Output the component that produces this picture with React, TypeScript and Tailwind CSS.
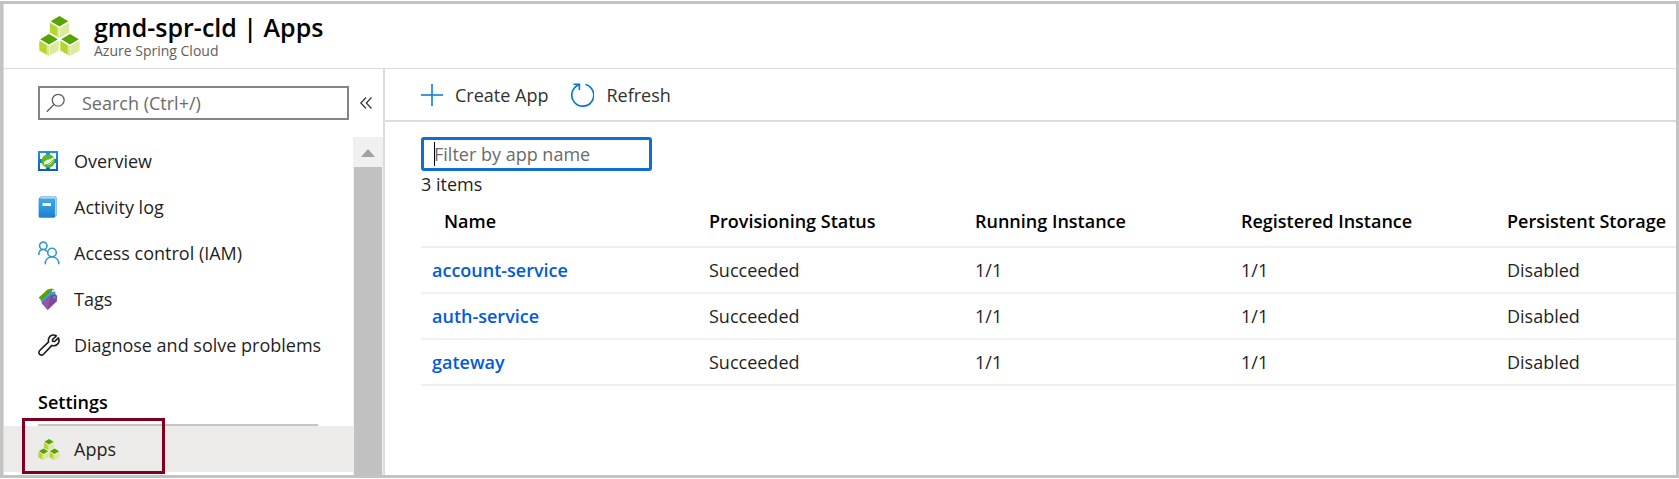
import type { ReactNode } from "react";

type App = {
  name: string;
  status: string;
  running: string;
  registered: string;
  storage: string;
};

const apps: App[] = [
  { name: "account-service", status: "Succeeded", running: "1/1", registered: "1/1", storage: "Disabled" },
  { name: "auth-service", status: "Succeeded", running: "1/1", registered: "1/1", storage: "Disabled" },
  { name: "gateway", status: "Succeeded", running: "1/1", registered: "1/1", storage: "Disabled" },
];

function Cube({ x, y }: { x: number; y: number }) {
  return (
    <g transform={`translate(${x} ${y})`}>
      <path d="M10 0 18.8 5.2 10 10.5 1.2 5.2Z" fill="#57a300" />
      <path d="M0.3 6.6 9.6 12.2V21.8L0.3 16.6Z" fill="#b4d62f" />
      <path d="M19.7 6.6 10.4 12.2V21.8L19.7 16.6Z" fill="#dcea9c" />
      <path d="M7.6 11 9.6 12.2V21.8L7.6 20.7Z" fill="#d9e98c" />
    </g>
  );
}

function CubesIcon({ className }: { className: string }) {
  return (
    <svg viewBox="0 0 41 40" className={className} aria-hidden="true">
      <Cube x={10.5} y={0} />
      <Cube x={0} y={18} />
      <Cube x={21} y={18} />
    </svg>
  );
}

function OverviewIcon() {
  return (
    <svg viewBox="0 0 20 20" className="size-5" aria-hidden="true">
      <defs>
        <linearGradient id="overview-frame" gradientUnits="userSpaceOnUse" x1="0" y1="0" x2="0" y2="20">
          <stop offset="0" stopColor="#1b93eb" />
          <stop offset="1" stopColor="#0f5cb5" />
        </linearGradient>
      </defs>
      <path
        d="M1 1H9V9H1ZM11 1H19V9H11ZM1 11H9V19H1ZM11 11H19V19H11Z"
        fill="#fff"
        stroke="url(#overview-frame)"
        strokeWidth="2"
      />
      <circle cx="10.2" cy="10" r="6.8" fill="#5db72e" />
      <path
        d="M15.600 5.500C14 8.200 11 8.200 8.800 9 6.200 10 5.400 12 6.200 13.800 9.500 14.800 13.200 13.200 14.800 10.400 15.700 8.800 15.900 7.200 15.600 5.500Z"
        fill="#eaf6e2"
      />
      <path d="M7 14C10.400 13.600 13.200 11.800 14.800 8.800" fill="none" stroke="#5db72e" strokeWidth="1" />
    </svg>
  );
}

function LogIcon() {
  return (
    <svg viewBox="0 0 20 22" className="h-[22px] w-5" aria-hidden="true">
      <defs>
        <linearGradient id="log-cover" x1="0" y1="0" x2="0" y2="1">
          <stop offset="0" stopColor="#3fa9ee" />
          <stop offset="1" stopColor="#1a80d2" />
        </linearGradient>
      </defs>
      <path d="M3 0.500H17.500A1 1 0 0 1 18.500 1.500V19.500L16.500 21.500H2A1.200 1.200 0 0 1 0.800 20.300V2.500Z" fill="#2a8cd8" />
      <path d="M3 1.300H17.700V19.300L16.900 20V2.400H1.800Z" fill="#e8f4fd" />
      <path d="M0.800 3H16.500V21.500H2A1.200 1.200 0 0 1 0.800 20.300Z" fill="url(#log-cover)" />
      <rect x="4.500" y="7" width="8.500" height="3" fill="#fff" />
    </svg>
  );
}

function PeopleIcon() {
  return (
    <svg
      viewBox="0 0 22 24"
      className="h-6 w-[22px]"
      fill="none"
      stroke="#3999c6"
      strokeWidth="1.600"
      strokeLinecap="round"
      aria-hidden="true"
    >
      <circle cx="5.300" cy="4.800" r="3.700" />
      <path d="M0.800 13.500C0.900 10.600 2.700 8.500 5.300 8.500 6.600 8.500 7.700 9 8.500 9.900" />
      <circle cx="14" cy="11.500" r="4.300" />
      <path d="M7.200 22.600C7.400 18.600 10.200 15.900 14 15.900S20.600 18.600 20.900 22.600" />
    </svg>
  );
}

function TagsIcon() {
  return (
    <svg viewBox="0 0 20 22" className="h-[22px] w-5" aria-hidden="true">
      <path d="M0.800 9.500 9.500 1.500 14 0.400 15.800 1.500V6L4 13.500Z" fill="#57a300" />
      <path d="M2.600 12.500 12.500 4 16.200 3.200 17.400 4.500V9L5 16.500Z" fill="#3c9fd4" />
      <path d="M3.600 15 12.500 7.200 17.400 6.200 19.200 7.700 18.800 13.200 9.800 22Z" fill="#804998" />
      <path d="M3.600 15 12.500 7.200 9.800 22Z" fill="#9059a8" />
      <circle cx="14.800" cy="2.900" r="1" fill="#fff" />
      <circle cx="16.400" cy="9.400" r="1.300" fill="#3c9fd4" />
    </svg>
  );
}

function WrenchIcon() {
  return (
    <svg
      viewBox="0 0 22 22"
      className="size-[22px]"
      fill="none"
      stroke="#1b1a19"
      strokeWidth="1.600"
      strokeLinejoin="round"
      aria-hidden="true"
    >
      <path d="M18.300 1.900C16.300 0.600 13.400 0.900 11.800 2.600 10.300 4.200 10.100 6 10.600 7.900L1.700 16.500C0.600 17.600 0.600 19.300 1.700 20.300 2.800 21.300 4.400 21.300 5.500 20.200L13.900 11.400C15.900 12 18 11.600 19.500 10.100 21.100 8.500 21.500 6.100 20.300 3.900L16.700 7.500 14.700 7.300 14.500 5.500Z" />
    </svg>
  );
}

function NavItem({ icon, children, current = false }: { icon: ReactNode; children: ReactNode; current?: boolean }) {
  return (
    <li>
      <a
        href="#"
        aria-current={current ? "page" : undefined}
        className={
          current
            ? "flex h-[46px] items-center bg-[#edebe9] pl-[34px]"
            : "flex h-[46px] items-center pl-[34px]"
        }
      >
        <span className="flex w-9 items-center">{icon}</span>
        {children}
      </a>
    </li>
  );
}

export default function AppsPage() {
  return (
    <div className="min-h-screen bg-white pt-px font-['Open_Sans','Noto_Sans',sans-serif] text-[18px] text-[#1f1f1f]">
      <div className="flex min-h-[477px] flex-col border-[3px] border-[#c3c3c3]">
        <header className="flex h-[65px] items-center border-b border-l border-[#dcdcdc] pl-[35px]">
          <CubesIcon className="h-10 w-[41px]" />
          <div className="ml-[14px]">
            <h1 className="text-[25px] leading-[30px] font-semibold text-black">gmd-spr-cld | Apps</h1>
            <p className="text-[14px] leading-[18px] text-[#605e5c]">Azure Spring Cloud</p>
          </div>
        </header>

        <div className="flex grow">
          <aside className="flex w-[382px] shrink-0 flex-col border-r-2 border-l border-[#dcdcdc]">
            <div className="flex items-center pt-[17px] pl-[34px]">
              <div className="flex h-[34px] w-[311px] items-center border-2 border-[#848484] px-[6px]">
                <svg viewBox="0 0 20 20" className="mr-4 size-5 shrink-0" fill="none" stroke="#605e5c" strokeWidth="1.300" aria-hidden="true">
                  <circle cx="12.200" cy="7.200" r="5.900" />
                  <path d="M8 11.500 0.800 18.700" />
                </svg>
                <input
                  type="search"
                  aria-label="Search"
                  placeholder="Search (Ctrl+/)"
                  className="w-full min-w-0 bg-transparent outline-none placeholder:text-[#6b6b6b]"
                />
              </div>
              <button type="button" aria-label="Collapse menu" className="ml-[11px]">
                <svg viewBox="0 0 12 12" className="size-3" fill="none" stroke="#323130" strokeWidth="1.200" aria-hidden="true">
                  <path d="M6 0.500 0.800 6 6 11.500M11.500 0.500 6.300 6 11.500 11.500" />
                </svg>
              </button>
            </div>

            <div className="mt-[17px] flex grow">
              <nav className="grow pt-px">
                <ul>
                  <NavItem icon={<OverviewIcon />}>Overview</NavItem>
                  <NavItem icon={<LogIcon />}>Activity log</NavItem>
                  <NavItem icon={<PeopleIcon />}>Access control (IAM)</NavItem>
                  <NavItem icon={<TagsIcon />}>Tags</NavItem>
                  <NavItem icon={<WrenchIcon />}>Diagnose and solve problems</NavItem>
                </ul>
                <h2 className="mr-[35px] ml-[34px] flex h-[58px] items-center border-b-2 border-[#c4c4c4] pt-3 font-semibold text-black">
                  Settings
                </h2>
                <ul className="relative">
                  <NavItem icon={<CubesIcon className="h-[21px] w-[22px]" />} current>
                    Apps
                  </NavItem>
                  <li aria-hidden="true" className="absolute -top-2 left-[18px] h-14 w-[143px] border-[3px] border-[#800020]" />
                </ul>
              </nav>
              <div className="flex w-[30px] shrink-0 flex-col bg-[#f0f0f0]" aria-hidden="true">
                <svg viewBox="0 0 30 30" className="h-[30px]">
                  <path d="M15 12 22 20H8Z" fill="#a0a0a0" />
                </svg>
                <div className="mx-px grow bg-[#c1c1c1]" />
              </div>
            </div>
          </aside>

          <main className="min-w-0 grow">
            <div className="flex h-[53px] items-center border-b-2 border-[#dcdcdc] pt-px pl-9 text-[#323130]">
              <button type="button" className="flex items-center gap-3">
                <svg viewBox="0 0 22 22" className="size-[22px]" fill="none" stroke="#0078d4" strokeWidth="1.500" aria-hidden="true">
                  <path d="M11 0V22M0 11H22" />
                </svg>
                Create App
              </button>
              <button type="button" className="ml-[22px] flex items-center gap-3">
                <svg viewBox="0 0 24 24" className="size-6" fill="none" stroke="#0078d4" strokeWidth="1.600" aria-hidden="true">
                  <path d="M15.500 1.500A11 11 0 1 1 8.500 2M3.500 1.200H9.400V7" />
                </svg>
                Refresh
              </button>
            </div>

            <div className="pt-[15px] pl-9">
              <div className="relative flex h-[34px] w-[231px] items-center rounded-[3px] border-[3px] border-[#0c6fd1] px-[10px]">
                <input
                  type="text"
                  aria-label="Filter by app name"
                  placeholder="Filter by app name"
                  className="w-full min-w-0 bg-transparent outline-none placeholder:text-[#6b6b6b]"
                />
                <span className="absolute left-[10px] h-6 w-px bg-black" />
              </div>
              <p className="mt-px leading-6">3 items</p>

              <table className="w-full table-fixed text-left">
                <colgroup>
                  <col className="w-[288px]" />
                  <col className="w-[266px]" />
                  <col className="w-[266px]" />
                  <col className="w-[266px]" />
                  <col />
                </colgroup>
                <thead>
                  <tr className="h-[51px] border-b-2 border-[#eeeeec] whitespace-nowrap text-black">
                    <th className="pl-[23px] font-semibold">Name</th>
                    <th className="font-semibold">Provisioning Status</th>
                    <th className="font-semibold">Running Instance</th>
                    <th className="font-semibold">Registered Instance</th>
                    <th className="font-semibold">Persistent Storage</th>
                  </tr>
                </thead>
                <tbody>
                  {apps.map((app) => (
                    <tr key={app.name} className="h-[46px] border-b-2 border-[#f0f0f0]">
                      <td className="pl-[11px]">
                        <a href="#" className="font-semibold text-[#015cda]">
                          {app.name}
                        </a>
                      </td>
                      <td>{app.status}</td>
                      <td>{app.running}</td>
                      <td>{app.registered}</td>
                      <td>{app.storage}</td>
                    </tr>
                  ))}
                </tbody>
              </table>
            </div>
          </main>
        </div>
      </div>
    </div>
  );
}
